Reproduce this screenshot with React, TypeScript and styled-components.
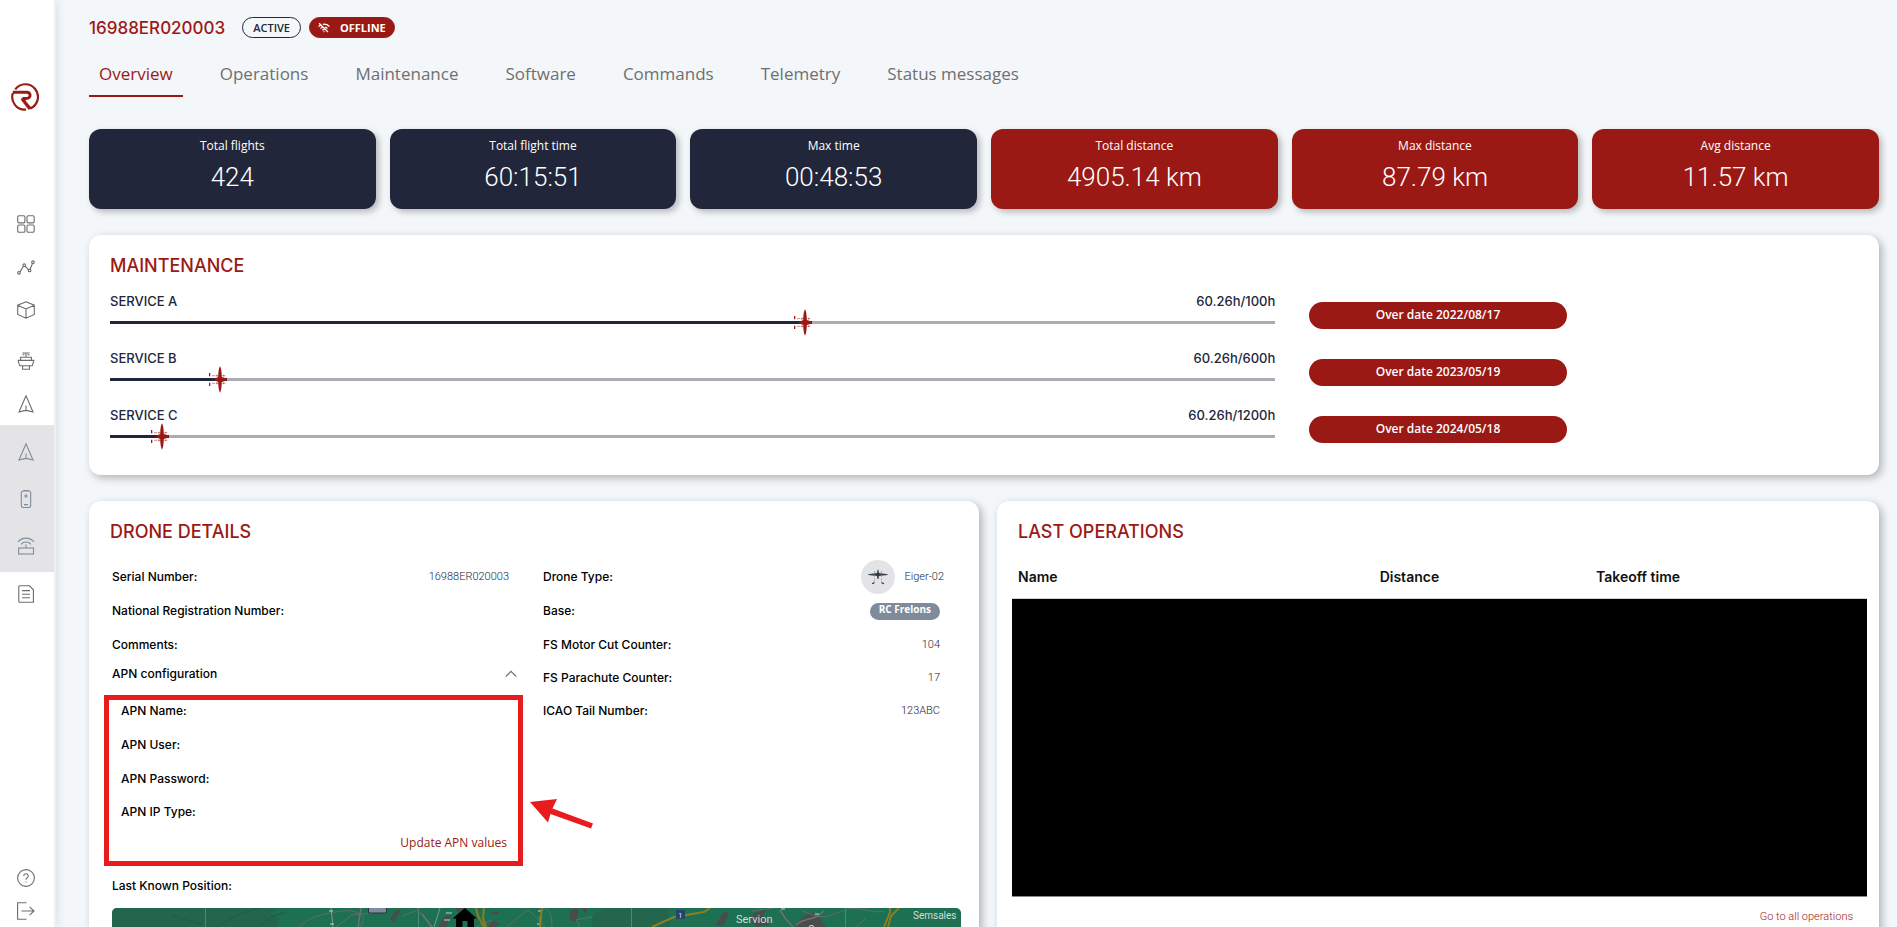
import React from "react";
import styled, { createGlobalStyle, css } from "styled-components";

const RED = "#9b1915";
const NAVY = "#22263a";
const HEADING = `"Inter", "Liberation Sans", sans-serif`;
const BODY = `"Open Sans", "Noto Sans", sans-serif`;
const LIGHT = `"Roboto", "Open Sans", sans-serif`;

const GlobalStyle = createGlobalStyle`
  *, *::before, *::after { box-sizing: border-box; }
  body { margin: 0; background: #f3f7fa; color: ${NAVY}; font-family: ${BODY}; }
  button { font: inherit; border: 0; padding: 0; background: none; cursor: pointer; }
  a { color: inherit; text-decoration: none; }
  h1, h2, p, dl, dd, dt { margin: 0; }
`;

/* ---------- Layout ---------- */

const Shell = styled.div`
  display: flex;
  height: 100vh;
`;

const Sidebar = styled.aside`
  flex: 0 0 56px;
  display: flex;
  flex-direction: column;
  background: #fff;
  border-right: 2px solid #f1efef;
  box-shadow: 0 0 10px rgba(0, 0, 0, 0.12);
`;

const LogoLink = styled.a`
  display: block;
  height: 28px;
  margin: 83px 0 91px 11px;
`;

const NavGroup = styled.nav<{ $active?: boolean; $gap?: boolean }>`
  display: flex;
  flex-direction: column;
  color: #6c6c6c;
  ${(p) => p.$gap && css`margin-top: 8px;`}
  ${(p) =>
    p.$active &&
    css`
      padding: 3px 0;
      background: #e4e4e6;
      color: #7f8b9b;
    `}
`;

const NavLink = styled.a<{ $height?: number }>`
  display: flex;
  align-items: center;
  justify-content: center;
  width: 52px;
  height: ${(p) => p.$height ?? 43}px;
`;

const SidebarFooter = styled.div`
  margin-top: auto;
  color: #6c6c6c;
`;

const Main = styled.main`
  flex: 1;
  min-width: 0;
  padding: 17px 18px 24px 33px;
  overflow-y: auto;
  scrollbar-width: none;
`;

/* ---------- Header ---------- */

const Header = styled.header`
  display: flex;
  align-items: center;
  height: 21px;
`;

const DroneTitle = styled.h1`
  margin-right: 17px;
  font: 500 17px/20px ${HEADING};
  color: ${RED};
`;

const Badge = styled.span<{ $filled?: boolean }>`
  display: inline-flex;
  align-items: center;
  gap: 10px;
  height: 21px;
  margin-right: 8px;
  padding: 0 ${(p) => (p.$filled ? 8 : 10)}px;
  border: 1px solid ${(p) => (p.$filled ? RED : NAVY)};
  border-radius: 11px;
  background: ${(p) => (p.$filled ? RED : "transparent")};
  color: ${(p) => (p.$filled ? "#fff" : NAVY)};
  font: ${(p) => (p.$filled ? 700 : 600)} 11px/19px ${BODY};
`;

const Tabs = styled.nav`
  display: flex;
  gap: 27px;
  margin-top: 20px;
`;

const Tab = styled.a<{ $active?: boolean }>`
  padding: 4px 10px 9px;
  border-bottom: 2px solid ${(p) => (p.$active ? RED : "transparent")};
  color: ${(p) => (p.$active ? RED : "#6f6f6f")};
  font: 500 17px/24px ${BODY};
`;

/* ---------- Stat cards ---------- */

const Stats = styled.section`
  display: grid;
  grid-template-columns: repeat(6, 1fr);
  gap: 14px;
  margin-top: 32px;
`;

const StatCard = styled.div<{ $red?: boolean }>`
  height: 80px;
  padding-top: 8px;
  border-radius: 12px;
  background: ${(p) => (p.$red ? RED : NAVY)};
  box-shadow: 3px 3px 6px rgba(0, 0, 0, 0.25);
  color: #fff;
  text-align: center;
`;

const StatLabel = styled.p`
  font: 400 12px/18px ${BODY};
`;

const StatValue = styled.p`
  margin-top: 4px;
  font: 350 26px/36px ${LIGHT};
`;

/* ---------- Panels ---------- */

const Panel = styled.section`
  border-radius: 12px;
  background: #fff;
  box-shadow: 3px 3px 8px rgba(0, 0, 0, 0.28);
`;

const PanelTitle = styled.h2`
  font: 500 18px/20px ${HEADING};
  color: ${RED};
`;

const MaintenancePanel = styled(Panel)`
  margin-top: 26px;
  padding: 21px 21px 11px;
`;

const ServiceRow = styled.div`
  display: grid;
  grid-template-columns: 8fr 2fr 2fr;
  height: 57px;
`;

const ServiceList = styled.div`
  margin-top: 17px;
`;

const ServiceCaption = styled.div`
  display: flex;
  justify-content: space-between;
  font: 500 13px/16px ${HEADING};
`;

const Track = styled.div`
  height: 3px;
  margin-top: 12px;
  background: #adabb3;
`;

const TrackFill = styled.div`
  position: relative;
  height: 100%;
  background: ${NAVY};
`;

const TrackPlane = styled.svg`
  position: absolute;
  right: 0;
  top: -12px;
`;

const OverdueButton = styled.button`
  height: 27px;
  margin: 9px 0 0 34px;
  padding-bottom: 1px;
  border-radius: 14px;
  background: ${RED};
  color: #fff;
  font: 600 12px/20px ${BODY};
`;

const Columns = styled.div`
  display: grid;
  grid-template-columns: 890fr 882fr;
  gap: 18px;
  margin-top: 26px;
`;

const DetailsPanel = styled(Panel)`
  padding: 21px 18px 24px 23px;
`;

const DetailsTitle = styled(PanelTitle)`
  margin-left: -2px;
`;

const DetailGrid = styled.div`
  display: grid;
  grid-template-columns: 397px 397px;
  column-gap: 34px;
  margin-top: 18px;
`;

const DetailRow = styled.div`
  display: flex;
  align-items: center;
  justify-content: space-between;
  height: 33px;

  &:nth-child(-n + 2) {
    height: 34px;
  }
`;

const DetailTerm = styled.dt`
  font: 500 12px/16px ${HEADING};
  color: #000;
`;

const DetailValue = styled.dd`
  display: flex;
  align-items: center;
  gap: 9px;
  font: 300 11px/16px ${LIGHT};
  color: ${NAVY};
`;

const DroneTypeValue = styled(DetailValue)`
  margin-right: -4px;
`;

const DroneAvatar = styled.span`
  display: flex;
  align-items: center;
  justify-content: center;
  width: 34px;
  height: 34px;
  border-radius: 50%;
  background: #e4e4e6;
`;

const BaseChip = styled.span`
  height: 17px;
  padding: 0 9px;
  border-radius: 9px;
  background: #7f8b9b;
  color: #fff;
  font: 700 10px/13px ${BODY};
`;

const ApnToggle = styled.button`
  display: flex;
  align-items: center;
  justify-content: space-between;
  width: 405px;
  height: 26px;
  font: 500 12px/16px ${HEADING};
  color: #000;
`;

const ApnSection = styled.div`
  position: relative;
  margin-top: 7px;
  padding: 0 2px 0 9px;
`;

const Highlight = styled.div`
  position: absolute;
  inset: 1px -14px -11px -8px;
  border: 5px solid #e81c1c;
  pointer-events: none;
`;

const Arrow = styled.svg`
  position: absolute;
  left: 100%;
  top: 103px;
  margin-left: 20px;
`;

const UpdateButton = styled.button`
  display: block;
  margin: 3px 0 0 auto;
  font: 400 12px/24px ${BODY};
  color: ${RED};
`;

const MapLabel = styled.p`
  margin: 23px 0 14px;
  font: 500 12px/16px ${HEADING};
  color: #000;
`;

const MapFrame = styled.div`
  height: 300px;
  border-radius: 5px;
  overflow: hidden;
  background: #1d7052;
`;

/* ---------- Last operations ---------- */

const OperationsPanel = styled(Panel)`
  padding: 21px 12px 24px 15px;
`;

const OperationsTitle = styled(PanelTitle)`
  margin-left: 6px;
`;

const OperationsTable = styled.table`
  width: 100%;
  margin-top: 18px;
  border-collapse: collapse;
  table-layout: fixed;
`;

const HeadCell = styled.th<{ $width: string }>`
  width: ${(p) => p.$width};
  height: 38px;
  padding: 0 0 3px 6px;
  border-bottom: 1px solid #cfd3d6;
  font: 600 14px/20px ${HEADING};
  color: #111;
  text-align: left;
`;

const HiddenCell = styled.td`
  height: 298px;
  padding: 0;
  border-bottom: 1px solid #8c8c8c;
  background: #000;
`;

const AllOperationsLink = styled.a`
  display: block;
  margin: 11px 14px 0 0;
  font: 300 11px/18px ${LIGHT};
  color: ${RED};
  text-align: right;
`;

/* ---------- Drawings ---------- */

const Icon = ({ children, size = 18 }: { children: React.ReactNode; size?: number }) => (
  <svg width={size} height={size} viewBox="0 0 18 18" fill="none" stroke="currentColor" strokeWidth="1.1" aria-hidden="true">
    {children}
  </svg>
);

const Logo = () => (
  <svg width="28" height="28" viewBox="0 0 28 28" fill="none" stroke={RED} aria-hidden="true">
    <path d="M4.200 6.400A12.600 12.600 0 1 1 19.400 25.400" strokeWidth="2.200" />
    <path d="M1.900 10A12.600 12.600 0 0 0 15 26.600" strokeWidth="2.200" />
    <path d="M1.800 9.200H16a3.100 3.100 0 0 1 0 6.200h-4.500" strokeWidth="2.900" />
    <path d="M10.200 15.400h4.800l-.4 2.600 6 7.300-3 1.300L10.400 17.200z" fill={RED} strokeWidth=".4" />
  </svg>
);

const GridIcon = () => (
  <Icon>
    {[0.7, 10].map((x) =>
      [0.7, 10].map((y) => <rect key={`${x}${y}`} x={x} y={y} width="7.2" height="7.2" rx="1.3" />)
    )}
  </Icon>
);

const ChartIcon = () => (
  <Icon>
    <path d="M3 13.9 6.4 8.2M8.1 8.2l3.4 3.6M13 11.5l2.6-6.2" />
    <circle cx="2" cy="14.8" r="1.3" />
    <circle cx="7.3" cy="7.2" r="1.3" />
    <circle cx="12.6" cy="12.4" r="1.3" />
    <circle cx="16" cy="4.2" r="1.3" />
  </Icon>
);

const CubeIcon = () => (
  <Icon>
    <path d="M9 .8 17.3 4.2v9.2L9 17.2.7 13.4V4.2zM.7 4.2 9 7.9l8.3-3.7M9 7.9v9.3" />
  </Icon>
);

const StationIcon = () => (
  <Icon>
    <path d="M5.400 1h7.200M9 1v4M5.600 2.800h1.800M10.600 2.800h1.800M3.600 5.200h10.800v3.200H3.600zM.8 8.400h16.400M1 8.400l1.800 5.400h12.400L17 8.400M5.600 13.800v3.400h6.800v-3.400" />
  </Icon>
);

const NavigatorIcon = () => (
  <Icon>
    <path d="M9 .8 2 17l5.4-1.4h3.2L16 17zM9 10.5v5.2" />
  </Icon>
);

const BatteryIcon = () => (
  <Icon>
    <rect x="4.3" y="1" width="9.4" height="16.5" rx="2" />
    <path d="M6.8 1V.4h4.4V1M9 4v4M7 6h4M7 14.6h4" />
  </Icon>
);

const RouterIcon = () => (
  <Icon>
    <rect x="1.7" y="11" width="14.8" height="6" />
    <path d="M9 11V7.5M1 4.8a10.5 10.5 0 0 1 16 0M4 7.3a6.6 6.6 0 0 1 10 0" />
  </Icon>
);

const DocumentIcon = () => (
  <Icon>
    <path d="M2.800.8h9.600l4 4v12.400H2.800a1 1 0 0 1-1-1V1.800a1 1 0 0 1 1-1zM5 5.600h8M5 9.200h8M5 12.800h8" />
  </Icon>
);

const HelpIcon = () => (
  <Icon>
    <circle cx="9" cy="9" r="8.4" />
    <path d="M6.7 7a2.3 2.3 0 1 1 3.3 2.1c-.7.4-1 .8-1 1.7M9 12.4v1.2" />
  </Icon>
);

const LogoutIcon = () => (
  <Icon>
    <path d="M9.5.7H.6v16.6h8.9M4.5 9H17M12.6 4.8 17 9l-4.4 4.2" />
  </Icon>
);

const OfflineIcon = () => (
  <svg width="12" height="12" viewBox="0 0 13 12" fill="none" stroke="#fff" strokeWidth="1.4" aria-hidden="true">
    <path d="M1.2.8 10.8 10.4M.6 4.3c.8-.7 1.5-1.1 2.4-1.5M5.2 2a8.6 8.6 0 0 1 7.2 2.3M2.6 6.4c.7-.6 1.4-1 2.2-1.2M7.4 5.1c1.1.2 2 .6 2.9 1.4M4.7 8.4a3 3 0 0 1 2-.8" />
    <circle cx="6.5" cy="10" r=".7" fill="#fff" stroke="none" />
  </svg>
);

const ChevronUp = () => (
  <svg width="12" height="8" viewBox="0 0 12 8" fill="none" stroke="#6c6c6c" strokeWidth="1.2" aria-hidden="true">
    <path d="M.7 6.7 6 1.3l5.3 5.4" />
  </svg>
);

const DronePicture = () => (
  <svg width="20" height="16" viewBox="0 0 20 16" fill="#33414b" aria-hidden="true">
    <path d="M.3 5.2 9 4l.6-3.2h.8L11 4l8.7 1.2v.8L11 7l-.5 3h-1L9 7 .3 6z" />
    <path d="M6.6 2v6M13.400 2v6" stroke="#7d888f" strokeWidth=".6" />
    <path d="M6.8 9 6 14.2M13.2 9l.8 5.2" stroke="#9aa3a9" strokeWidth=".6" />
    <path d="M4 14.8 6.4 13.6M16 14.8l-2.4-1.2" stroke="#33414b" strokeWidth="1.2" />
  </svg>
);

const PlaneMarker = () => (
  <TrackPlane width="18" height="27" viewBox="0 0 18 27" fill={RED} aria-hidden="true">
    <path d="M11 .3c1 1.5 1.700 5 1.800 10.600l4.300 1.400c1 .6 1 1.800 0 2.400l-4.300 1.400c-.1 5.600-.8 9-1.800 10.600-1-1.600-1.700-5-1.800-10.600L5 14.100v-1.200l4.200-2C9.300 5.300 10 1.800 11 .3z" />
    <path d="M0 7h1.300v3.300H0zM0 16.800h1.300V20H0z" />
    <path d="M3 9.700h14M3 17.300h14" stroke={RED} strokeWidth=".6" strokeDasharray="3 .7 6 .6" opacity=".8" />
    <path d="M8 8.600v2.200M8 16.200v2.200M14.600 8.700v1.800M14.600 16.400v1.800" stroke={RED} strokeWidth=".5" />
  </TrackPlane>
);

const PositionMap = () => (
  <svg width="849" height="300" viewBox="0 0 849 300" fill="none" role="img" aria-label="Last known position">
    <path fill="#23664d" d="M0 0H166l-8 6 10 5-4 8-20 281H0zM493 0h26v300h-30l4-262-14-14 2-18zM545 0h11l2 19 6 281h-45V0zM493 0h52v19h-48l-16-10z" />
    <path stroke="#1f5c46" d="M104 19l26-14 18-5M146 19l14-11 14-4M60 8l30 8" />
    <path stroke="#4f8b74" d="M93.500 0v300M306.500 0v300M519.500 0v300M733.500 0v300" />
    <path fill="#4a4b4b" d="M278 10l8-9 2 3-5 8-3 2zM344 0h10l-4 6-5-2zM339 7l-5 12h-8l6-10zM377 5l11-2-3 4zM375 19l6-6 7 2-5 4zM458 3l5-3 4 1-3 13-6-2zM470 0l6 0-3 6zM612 4l5 1-6 13-8-1zM641 6l14-6-4 8 6 9-12 2-6-6zM690 9l10-5 8 7 6 8h-30z" />
    <path stroke="#5d6f68" d="M188 19c6-9 20-12 30-14s20-4 28 0 6 8 2 14M224 19l16-12 30-3M290 8l16-6 8 10 5 7M395 19l20-17 6 4 12 13M430 3c6-5 10 2 10 16M480 9l-16 3 4 7M690 3c12 4 18 8 30 4s14-8 28-6 14 4 24 2M640 3l22-3M744 19l10-9M380 12l-16 7" />
    <path stroke="#6f6f76" strokeWidth="1.500" d="M249 0l-3 19M310 6l10 13M684 17l6-4 14-4 8-6M668 2l5 8 8 9" />
    <path stroke="#7f9a90" strokeWidth="1" d="M219 0l2 19M322 19l6-19M428 8v11" />
    <path stroke="#c8d6d0" strokeWidth="1" d="M217 3h4M218 16h4M334 5h6M332 12h6M426 3h4M425 16h4M669 1h4M703 6h4" />
    <path stroke="#8d7d22" strokeWidth="2" d="M364 0l2 8 6 11M372 0l-1 10 3 9M430 0l-2 19M540 19l22-10 30-5 6-4M772 19l6-15 0-4M776 19l3-11 8-8" />
    <path fill="#7f8ba0" stroke="#26333d" d="M256.500-2h18v7h-18z" />
    <path fill="#000" d="M353 0l12 10.500h-3V19h-6.500v-6h-5v6H344v-8.500h-3.500z" />
    <path fill="#26446b" d="M564 2h9v9h-9z" />
    <g fill="#d5ded9" fontFamily="Roboto, sans-serif">
      <text x="566" y="10" fontSize="8">1</text>
      <text x="624" y="15" fontSize="11">Servion</text>
      <text x="801" y="11" fontSize="10">Semsales</text>
      <text x="696" y="25" fontSize="10">Oron</text>
    </g>
  </svg>
);

/* ---------- Data ---------- */

const tabs = ["Overview", "Operations", "Maintenance", "Software", "Commands", "Telemetry", "Status messages"];

const stats = [
  { label: "Total flights", value: "424" },
  { label: "Total flight time", value: "60:15:51" },
  { label: "Max time", value: "00:48:53" },
  { label: "Total distance", value: "4905.14 km", red: true },
  { label: "Max distance", value: "87.79 km", red: true },
  { label: "Avg distance", value: "11.57 km", red: true },
];

const services = [
  { name: "SERVICE A", hours: 60.26, limit: 100, due: "2022/08/17" },
  { name: "SERVICE B", hours: 60.26, limit: 600, due: "2023/05/19" },
  { name: "SERVICE C", hours: 60.26, limit: 1200, due: "2024/05/18" },
];

const apnFields = ["APN Name:", "APN User:", "APN Password:", "APN IP Type:"];

const counters = [
  { term: "FS Motor Cut Counter:", value: "104" },
  { term: "FS Parachute Counter:", value: "17" },
  { term: "ICAO Tail Number:", value: "123ABC" },
];

export default function App() {
  return (
    <Shell>
      <GlobalStyle />
      <Sidebar>
        <LogoLink href="#" aria-label="Home"><Logo /></LogoLink>
        <NavGroup aria-label="Fleet">
          <NavLink href="#" aria-label="Dashboard"><GridIcon /></NavLink>
          <NavLink href="#" aria-label="Statistics"><ChartIcon /></NavLink>
          <NavLink href="#" aria-label="Inventory"><CubeIcon /></NavLink>
        </NavGroup>
        <NavGroup $gap aria-label="Equipment">
          <NavLink href="#" aria-label="Stations"><StationIcon /></NavLink>
          <NavLink href="#" aria-label="Aircraft"><NavigatorIcon /></NavLink>
        </NavGroup>
        <NavGroup $active aria-label="Aircraft parts">
          <NavLink $height={47} href="#" aria-label="Drones"><NavigatorIcon /></NavLink>
          <NavLink $height={47} href="#" aria-label="Batteries"><BatteryIcon /></NavLink>
          <NavLink $height={47} href="#" aria-label="Routers"><RouterIcon /></NavLink>
        </NavGroup>
        <NavGroup aria-label="Records">
          <NavLink href="#" aria-label="Documents"><DocumentIcon /></NavLink>
        </NavGroup>
        <SidebarFooter>
          <NavLink $height={33} href="#" aria-label="Help"><HelpIcon /></NavLink>
          <NavLink $height={33} href="#" aria-label="Log out"><LogoutIcon /></NavLink>
        </SidebarFooter>
      </Sidebar>

      <Main>
        <Header>
          <DroneTitle>16988ER020003</DroneTitle>
          <Badge>ACTIVE</Badge>
          <Badge $filled><OfflineIcon />OFFLINE</Badge>
        </Header>
        <Tabs>
          {tabs.map((tab, i) => (
            <Tab key={tab} href="#" $active={i === 0}>{tab}</Tab>
          ))}
        </Tabs>

        <Stats>
          {stats.map((s) => (
            <StatCard key={s.label} $red={s.red}>
              <StatLabel>{s.label}</StatLabel>
              <StatValue>{s.value}</StatValue>
            </StatCard>
          ))}
        </Stats>

        <MaintenancePanel>
          <PanelTitle>MAINTENANCE</PanelTitle>
          <ServiceList>
            {services.map((s) => (
              <ServiceRow key={s.name}>
                <div>
                  <ServiceCaption>
                    <span>{s.name}</span>
                    <span>{`${s.hours}h/${s.limit}h`}</span>
                  </ServiceCaption>
                  <Track>
                    <TrackFill style={{ width: `${(s.hours / s.limit) * 100}%` }}>
                      <PlaneMarker />
                    </TrackFill>
                  </Track>
                </div>
                <OverdueButton>Over date {s.due}</OverdueButton>
              </ServiceRow>
            ))}
          </ServiceList>
        </MaintenancePanel>

        <Columns>
          <DetailsPanel>
            <DetailsTitle>DRONE DETAILS</DetailsTitle>
            <DetailGrid>
              <div>
                <dl>
                  <DetailRow>
                    <DetailTerm>Serial Number:</DetailTerm>
                    <DetailValue>16988ER020003</DetailValue>
                  </DetailRow>
                  <DetailRow><DetailTerm>National Registration Number:</DetailTerm></DetailRow>
                  <DetailRow><DetailTerm>Comments:</DetailTerm></DetailRow>
                </dl>
                <ApnToggle aria-expanded="true">APN configuration<ChevronUp /></ApnToggle>
                <ApnSection>
                  <dl>
                    {apnFields.map((field) => (
                      <DetailRow key={field}><DetailTerm>{field}</DetailTerm></DetailRow>
                    ))}
                  </dl>
                  <UpdateButton>Update APN values</UpdateButton>
                  <Highlight />
                  <Arrow width="68" height="34" viewBox="0 0 68 34" fill="#e81c1c" aria-hidden="true">
                    <path d="M1 5 28 2l-4.500 9.500L64 26.500 62 31.500 21.500 17 19 25.500z" />
                  </Arrow>
                </ApnSection>
              </div>
              <dl>
                <DetailRow>
                  <DetailTerm>Drone Type:</DetailTerm>
                  <DroneTypeValue><DroneAvatar><DronePicture /></DroneAvatar>Eiger-02</DroneTypeValue>
                </DetailRow>
                <DetailRow>
                  <DetailTerm>Base:</DetailTerm>
                  <DetailValue><BaseChip>RC Frelons</BaseChip></DetailValue>
                </DetailRow>
                {counters.map((c) => (
                  <DetailRow key={c.term}>
                    <DetailTerm>{c.term}</DetailTerm>
                    <DetailValue>{c.value}</DetailValue>
                  </DetailRow>
                ))}
              </dl>
            </DetailGrid>
            <MapLabel>Last Known Position:</MapLabel>
            <MapFrame><PositionMap /></MapFrame>
          </DetailsPanel>

          <OperationsPanel>
            <OperationsTitle>LAST OPERATIONS</OperationsTitle>
            <OperationsTable>
              <thead>
                <tr>
                  <HeadCell $width="42.3%">Name</HeadCell>
                  <HeadCell $width="25.3%">Distance</HeadCell>
                  <HeadCell $width="32.4%">Takeoff time</HeadCell>
                </tr>
              </thead>
              <tbody>
                <tr><HiddenCell colSpan={3} /></tr>
              </tbody>
            </OperationsTable>
            <AllOperationsLink href="#">Go to all operations</AllOperationsLink>
          </OperationsPanel>
        </Columns>
      </Main>
    </Shell>
  );
}
